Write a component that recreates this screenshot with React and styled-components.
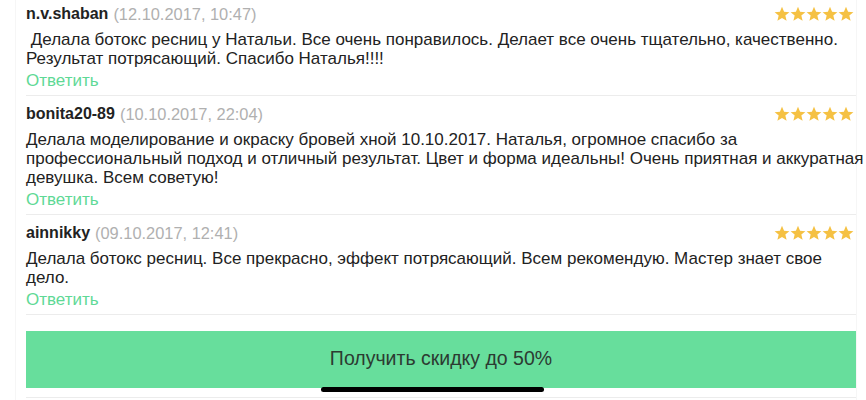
import React from "react";
import styled, { createGlobalStyle } from "styled-components";

const GlobalStyle = createGlobalStyle`
  html, body {
    margin: 0;
    padding: 0;
    background: #fff;
    height: 400px;
    overflow: hidden;
  }
  body {
    font-family: "Liberation Sans", Arial, Helvetica, sans-serif;
    color: #222;
    -webkit-font-smoothing: antialiased;
  }
`;

const Page = styled.div`
  position: relative;
  height: 400px;
  overflow: hidden;
`;

const Column = styled.div`
  margin: -4px 9px 0 15px;
  border-left: 1px solid #f6f6f6;
  border-right: 1px solid #f6f6f6;
  padding-left: 10px;
  min-height: 420px;
`;

const Review = styled.div`
  padding: 8px 0 4px;
  border-bottom: 1px solid #ececec;
`;

const Head = styled.div`
  display: flex;
  align-items: center;
  height: 20px;
  font-size: 16px;
  line-height: 20px;
`;

const Author = styled.span`
  font-weight: bold;
  color: #222;
`;

const When = styled.span`
  color: #b0b0b0;
  margin-left: 5px;
  font-size: 16.4px;
`;

const Stars = styled.div`
  margin-left: auto;
  display: flex;
  margin-right: 2px;
`;

const Body = styled.p`
  margin: 6px 0 0;
  font-size: 17px;
  line-height: 19px;
  color: #222;
  white-space: pre;
`;

const Reply = styled.a`
  display: block;
  margin-top: 3px;
  font-size: 17px;
  line-height: 20px;
  color: #5fd996;
  text-decoration: none;
`;

const Promo = styled.button`
  display: flex;
  align-items: center;
  justify-content: center;
  width: 100%;
  height: 57px;
  margin-top: 16px;
  border: 0;
  border-radius: 0;
  background: #67de9c;
  color: #2c3b32;
  font-family: "Liberation Sans", Arial, Helvetica, sans-serif;
  font-size: 19.5px;
  padding: 0 0 2px;
`;

const Rule = styled.div`
  margin-top: 9px;
  border-top: 1px solid #ececec;
`;

const HomeBar = styled.div`
  position: absolute;
  left: 50%;
  bottom: 8px;
  width: 223px;
  height: 5px;
  margin-left: -112px;
  border-radius: 3px;
  background: #000;
`;

function Star() {
  return (
    <svg width="16" height="16" viewBox="0 0 24 24">
      <path
        fill="#f5c143"
        d="M12 1.2l3.1 7.4 8 .6-6.1 5.2 1.9 7.8L12 18l-6.9 4.2 1.9-7.8L.9 9.2l8-.6z"
      />
    </svg>
  );
}

// lines are kept as the app wrapped them
const reviews = [
  {
    name: "n.v.shaban",
    date: "(12.10.2017, 10:47)",
    lines: [
      " Делала ботокс ресниц у Натальи. Все очень понравилось. Делает все очень тщательно, качественно.",
      "Результат потрясающий. Спасибо Наталья!!!!",
    ],
  },
  {
    name: "bonita20-89",
    date: "(10.10.2017, 22:04)",
    lines: [
      "Делала моделирование и окраску бровей хной 10.10.2017. Наталья, огромное спасибо за",
      "профессиональный подход и отличный результат. Цвет и форма идеальны! Очень приятная и аккуратная",
      "девушка. Всем советую!",
    ],
  },
  {
    name: "ainnikky",
    date: "(09.10.2017, 12:41)",
    lines: [
      "Делала ботокс ресниц. Все прекрасно, эффект потрясающий. Всем рекомендую. Мастер знает свое",
      "дело.",
    ],
  },
];

export default function App() {
  return (
    <Page>
      <GlobalStyle />
      <Column>
        {reviews.map((r) => (
          <Review key={r.name}>
            <Head>
              <Author>{r.name}</Author>
              <When>{r.date}</When>
              <Stars>
                {[0, 1, 2, 3, 4].map((i) => (
                  <Star key={i} />
                ))}
              </Stars>
            </Head>
            <Body>{r.lines.join("\n")}</Body>
            <Reply href="#">Ответить</Reply>
          </Review>
        ))}
        <Promo>Получить скидку до 50%</Promo>
        <Rule />
      </Column>
      <HomeBar />
    </Page>
  );
}
